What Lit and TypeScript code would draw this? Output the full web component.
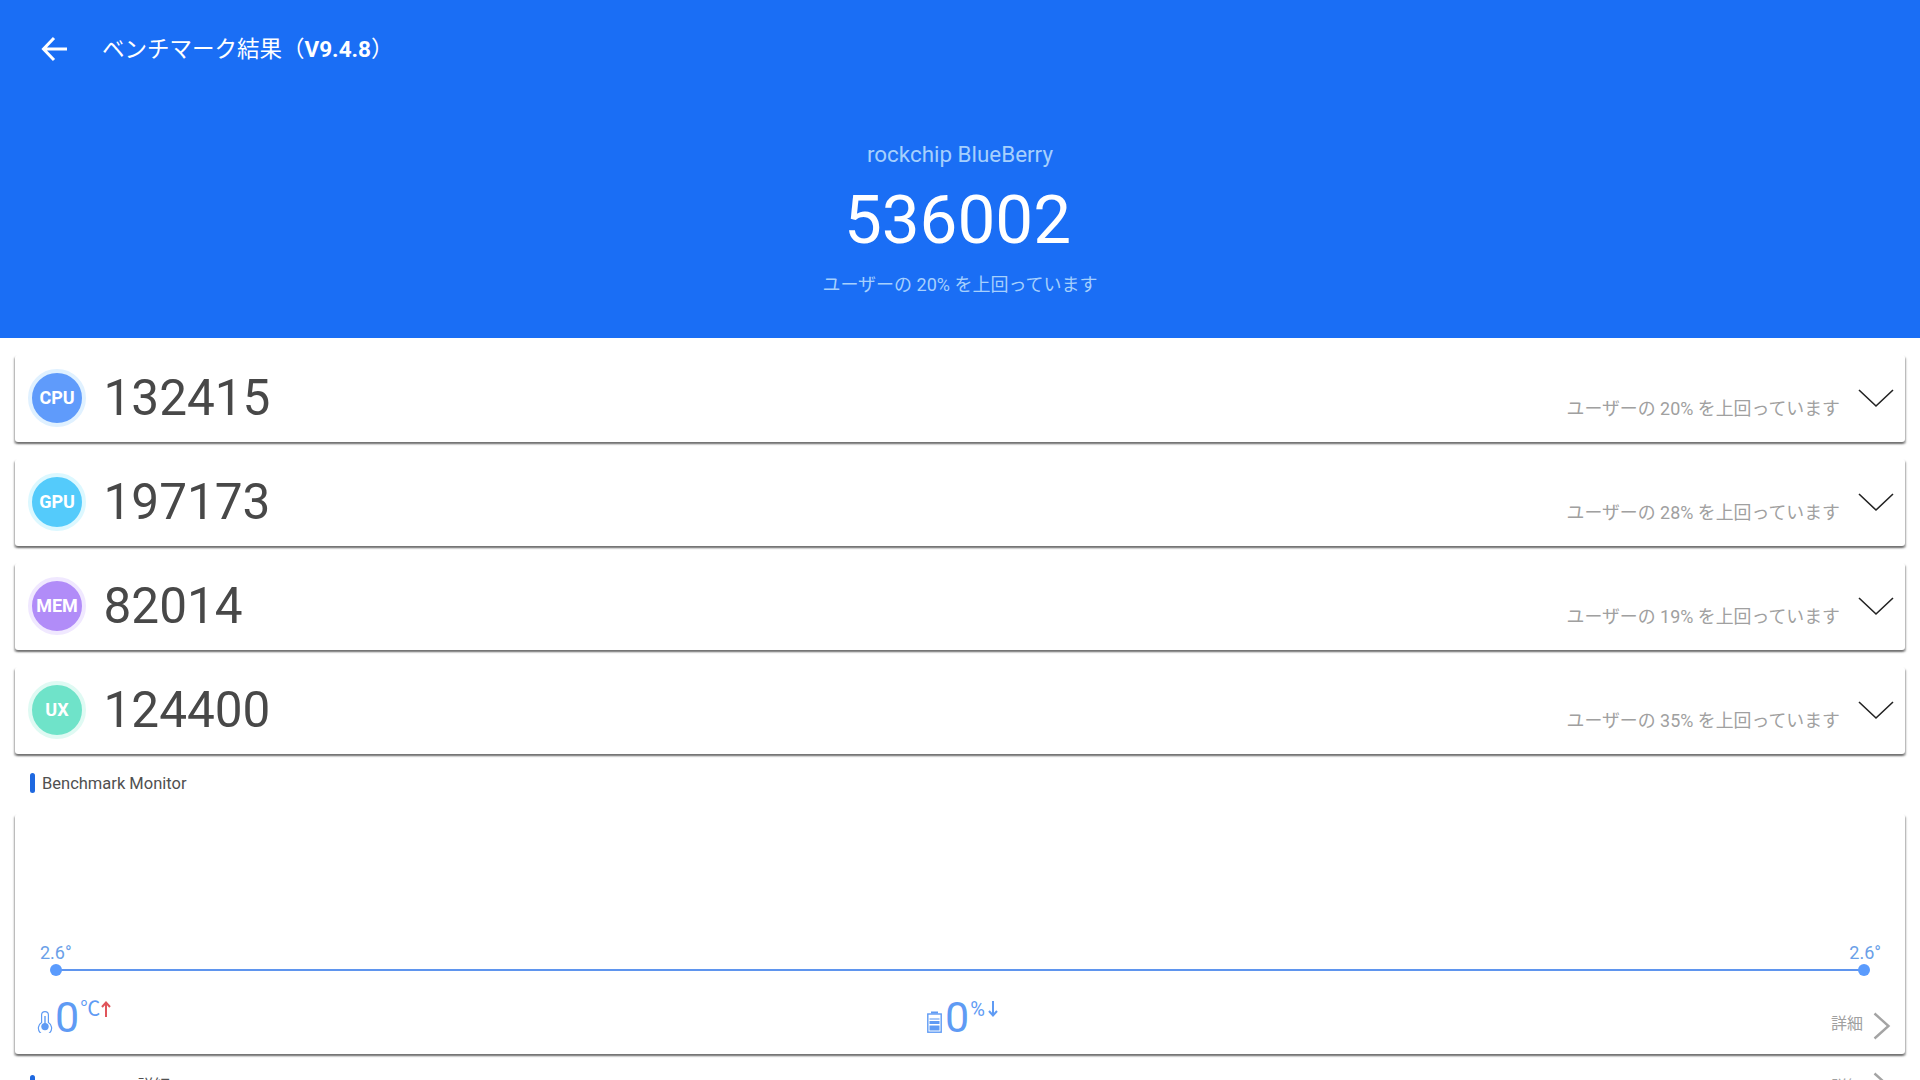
import { LitElement, html, css, svg } from "lit";
import { customElement } from "lit/decorators.js";

const rows = [
  { k: "CPU", v: "132415", p: "20", c: "#5f9bfb", r: "#e0f1ff" },
  { k: "GPU", v: "197173", p: "28", c: "#54cbfb", r: "#dcf8ff" },
  { k: "MEM", v: "82014", p: "19", c: "#b18cf8", r: "#f0e8ff" },
  { k: "UX", v: "124400", p: "35", c: "#6fe3c9", r: "#dffaf3" },
];

@customElement("app-root")
export class AppRoot extends LitElement {
  static styles = css`
    :host { display: block; width: 1920px; height: 1080px; overflow: hidden; background: #fff;
      font-family: Roboto, "Noto Sans CJK JP", sans-serif; }
    .hero { height: 338px; background: #1a6ef5; color: #fff; display: flex; flex-direction: column; box-sizing: border-box; }
    .bar { display: flex; align-items: center; height: 98px; padding-left: 41px; }
    .bar svg { width: 28px; height: 26px; margin-right: 33px; }
    .title { font-size: 22.5px; line-height: 30px; }
    .title b { font-weight: 700; }
    .center { display: flex; flex-direction: column; align-items: center; }
    .device { margin-top: 41px; font-size: 22.4px; line-height: 30px; color: #a6d0fd; }
    .score { margin: 10px 5px 0 0; font-size: 67.4px; line-height: 82px; color: #fff; }
    .beat { margin-top: 11px; font-size: 18px; line-height: 26px; color: #a6d0fd; }
    .list { padding: 17px 15px 0; display: flex; flex-direction: column; gap: 17px; }
    .card { height: 87px; background: #fff; border-radius: 3px; box-shadow: -1px 2px 2px -0.5px rgba(0,0,0,.34), 1px 2px 2px -0.5px rgba(0,0,0,.34);
      display: flex; align-items: center; padding: 0 11px 0 13px; box-sizing: border-box; }
    .badge { width: 58px; height: 58px; border: 4px solid; border-radius: 50%; display: flex; align-items: center; justify-content: center;
      color: #fff; font-weight: 700; font-size: 18px; flex: none; box-sizing: border-box; padding-bottom: 1px; margin-top: -1px; }
    .val { margin: -2px 0 0 17.5px; font-size: 49.5px; line-height: 60px; color: #484848; flex: 1; }
    .pct { font-size: 17.9px; line-height: 24px; color: #a0a0a0; margin-top: 20px; }
    .chev { width: 36px; height: 22px; margin-left: 18px; }
    .section { display: flex; align-items: center; height: 20px; margin: 19px 15px 21px 15px; padding-left: 15px; font-size: 16.5px; color: #505050; }
    .section i { flex: none; width: 5px; height: 20px; border-radius: 3px; background: #1e68e0; margin-right: 7px; }
    .mon { margin: 0 15px; height: 240px; background: #fff; border-radius: 3px;
      box-shadow: -1px 2px 2px -0.5px rgba(0,0,0,.34), 1px 2px 2px -0.5px rgba(0,0,0,.34);
      display: flex; flex-direction: column; justify-content: flex-end; padding: 0 24px 0 25px; box-sizing: border-box; }
    .labels { display: flex; justify-content: space-between; font-size: 18px; line-height: 22px; color: #6a9fe8; }
    .line { position: relative; height: 2px; background: #5f95ee; margin: 5px 17px 0 16px; }
    .dot { position: absolute; top: -5px; width: 12px; height: 12px; border-radius: 50%; background: #5a9bfd; }
    .dot.a { left: -6px; } .dot.b { right: -6px; }
    .stats { display: grid; grid-template-columns: 1fr auto 1fr; align-items: start; height: 83px; }
    .stat { display: flex; align-items: flex-start; color: #5f9bf4; }
    .stat.first { margin-left: -3px; }
    .stat.mid { margin-left: 4px; }
    .stat svg.ic { margin-top: 40px; flex: none; }
    .stat.mid svg.ic { margin-right: 1px; }
    .big { font-size: 43px; line-height: 50px; margin-top: 21px; margin-left: 2px; }
    .unit { font-size: 20px; line-height: 24px; margin-top: 26px; margin-left: 1px; }
    .arrow { margin-top: 30px; margin-left: 3px; flex: none; }
    .first .arrow { margin-left: 1px; }
    .detail { justify-self: end; display: flex; align-items: center; margin: 41px -10px 0 0; font-size: 16px; color: #a0a0a0; }
    .detail span { margin-top: -8px; }
    .detail svg { margin-left: 10px; }
    .next { margin: 21px 15px 0; padding: 0 14px 0 15px; display: flex; align-items: flex-start; height: 20px; font-size: 16.5px; line-height: 20px; color: #505050; justify-content: space-between; }
    .next .l, .next .r { display: flex; align-items: flex-start; }
    .next .r { color: #a0a0a0; font-size: 16px; margin-top: -3px; }
    .next .r span { margin-top: 5px; }
    .next .r svg { margin-left: 10px; }
    .next i { flex: none; width: 5px; height: 20px; border-radius: 3px; background: #1e68e0; margin-right: 7px; }
    .next .t { margin-top: 2px; }
  `;

  private chevR() {
    return svg`<svg width="18" height="28" viewBox="0 0 18 28"><path d="M1.5 1.5 15.5 14 1.5 26.5" fill="none" stroke="#a4a4a4" stroke-width="2.4"/></svg>`;
  }

  render() {
    return html`
      <div class="hero">
        <div class="bar">
          <svg viewBox="0 0 28 26"><path d="M26 13H3M13 2 2.5 13 13 24" fill="none" stroke="#fff" stroke-width="3"/></svg>
          <div class="title">ベンチマーク結果（<b>V9.4.8</b>）</div>
        </div>
        <div class="center">
          <div class="device">rockchip BlueBerry</div>
          <div class="score">536002</div>
          <div class="beat">ユーザーの 20% を上回っています</div>
        </div>
      </div>
      <div class="list">
        ${rows.map(r => html`
          <div class="card">
            <div class="badge" style="background:${r.c};border-color:${r.r}">${r.k}</div>
            <div class="val">${r.v}</div>
            <div class="pct">ユーザーの ${r.p}% を上回っています</div>
            <svg class="chev" viewBox="0 0 36 22"><path d="M1 2 18 18 35 2" fill="none" stroke="#222" stroke-width="1.6"/></svg>
          </div>`)}
      </div>
      <div class="section"><i></i>Benchmark Monitor</div>
      <div class="mon">
        <div class="labels"><span>2.6°</span><span>2.6°</span></div>
        <div class="line"><span class="dot a"></span><span class="dot b"></span></div>
        <div class="stats">
          <div class="stat first">
            <svg class="ic" width="16" height="22" viewBox="0 0 16 22"><path d="M4.6 11.5V4a3.4 3.4 0 0 1 6.8 0v7.5a6.6 6.6 0 1 1-6.8 0Z" fill="none" stroke="#5f9bf4" stroke-width="1.2"/><circle cx="8" cy="15.6" r="3.7" fill="#5f9bf4"/><path d="M8 5v9" stroke="#5f9bf4" stroke-width="1.4"/></svg>
            <span class="big">0</span><span class="unit">℃</span>
            <svg class="arrow" width="10" height="16" viewBox="0 0 10 16"><path d="M5 16V2M1 6 5 1.5 9 6" fill="none" stroke="#e0545a" stroke-width="2"/></svg>
          </div>
          <div class="stat mid">
            <svg class="ic" width="15" height="22" viewBox="0 0 15 22"><path d="M4 0.5h7v2H4z" fill="#5f9bf4"/><rect x="0.8" y="3" width="13.4" height="18.2" fill="none" stroke="#5f9bf4" stroke-width="1.4"/><path d="M2.5 7h10v2H2.5z" fill="#a9c9f8"/><path d="M2.5 10h10v3H2.5zM2.5 14.5h10v5H2.5z" fill="#5f9bf4"/></svg>
            <span class="big">0</span><span class="unit">%</span>
            <svg class="arrow" width="10" height="16" viewBox="0 0 10 16"><path d="M5 0V14M1 10 5 14.5 9 10" fill="none" stroke="#5f9bf4" stroke-width="2"/></svg>
          </div>
          <div class="detail"><span>詳細</span>${this.chevR()}</div>
        </div>
      </div>
      <div class="next">
        <div class="l"><i></i><span class="t">memory use 詳細</span></div>
        <div class="r"><span>詳細</span>${this.chevR()}</div>
      </div>
    `;
  }
}
